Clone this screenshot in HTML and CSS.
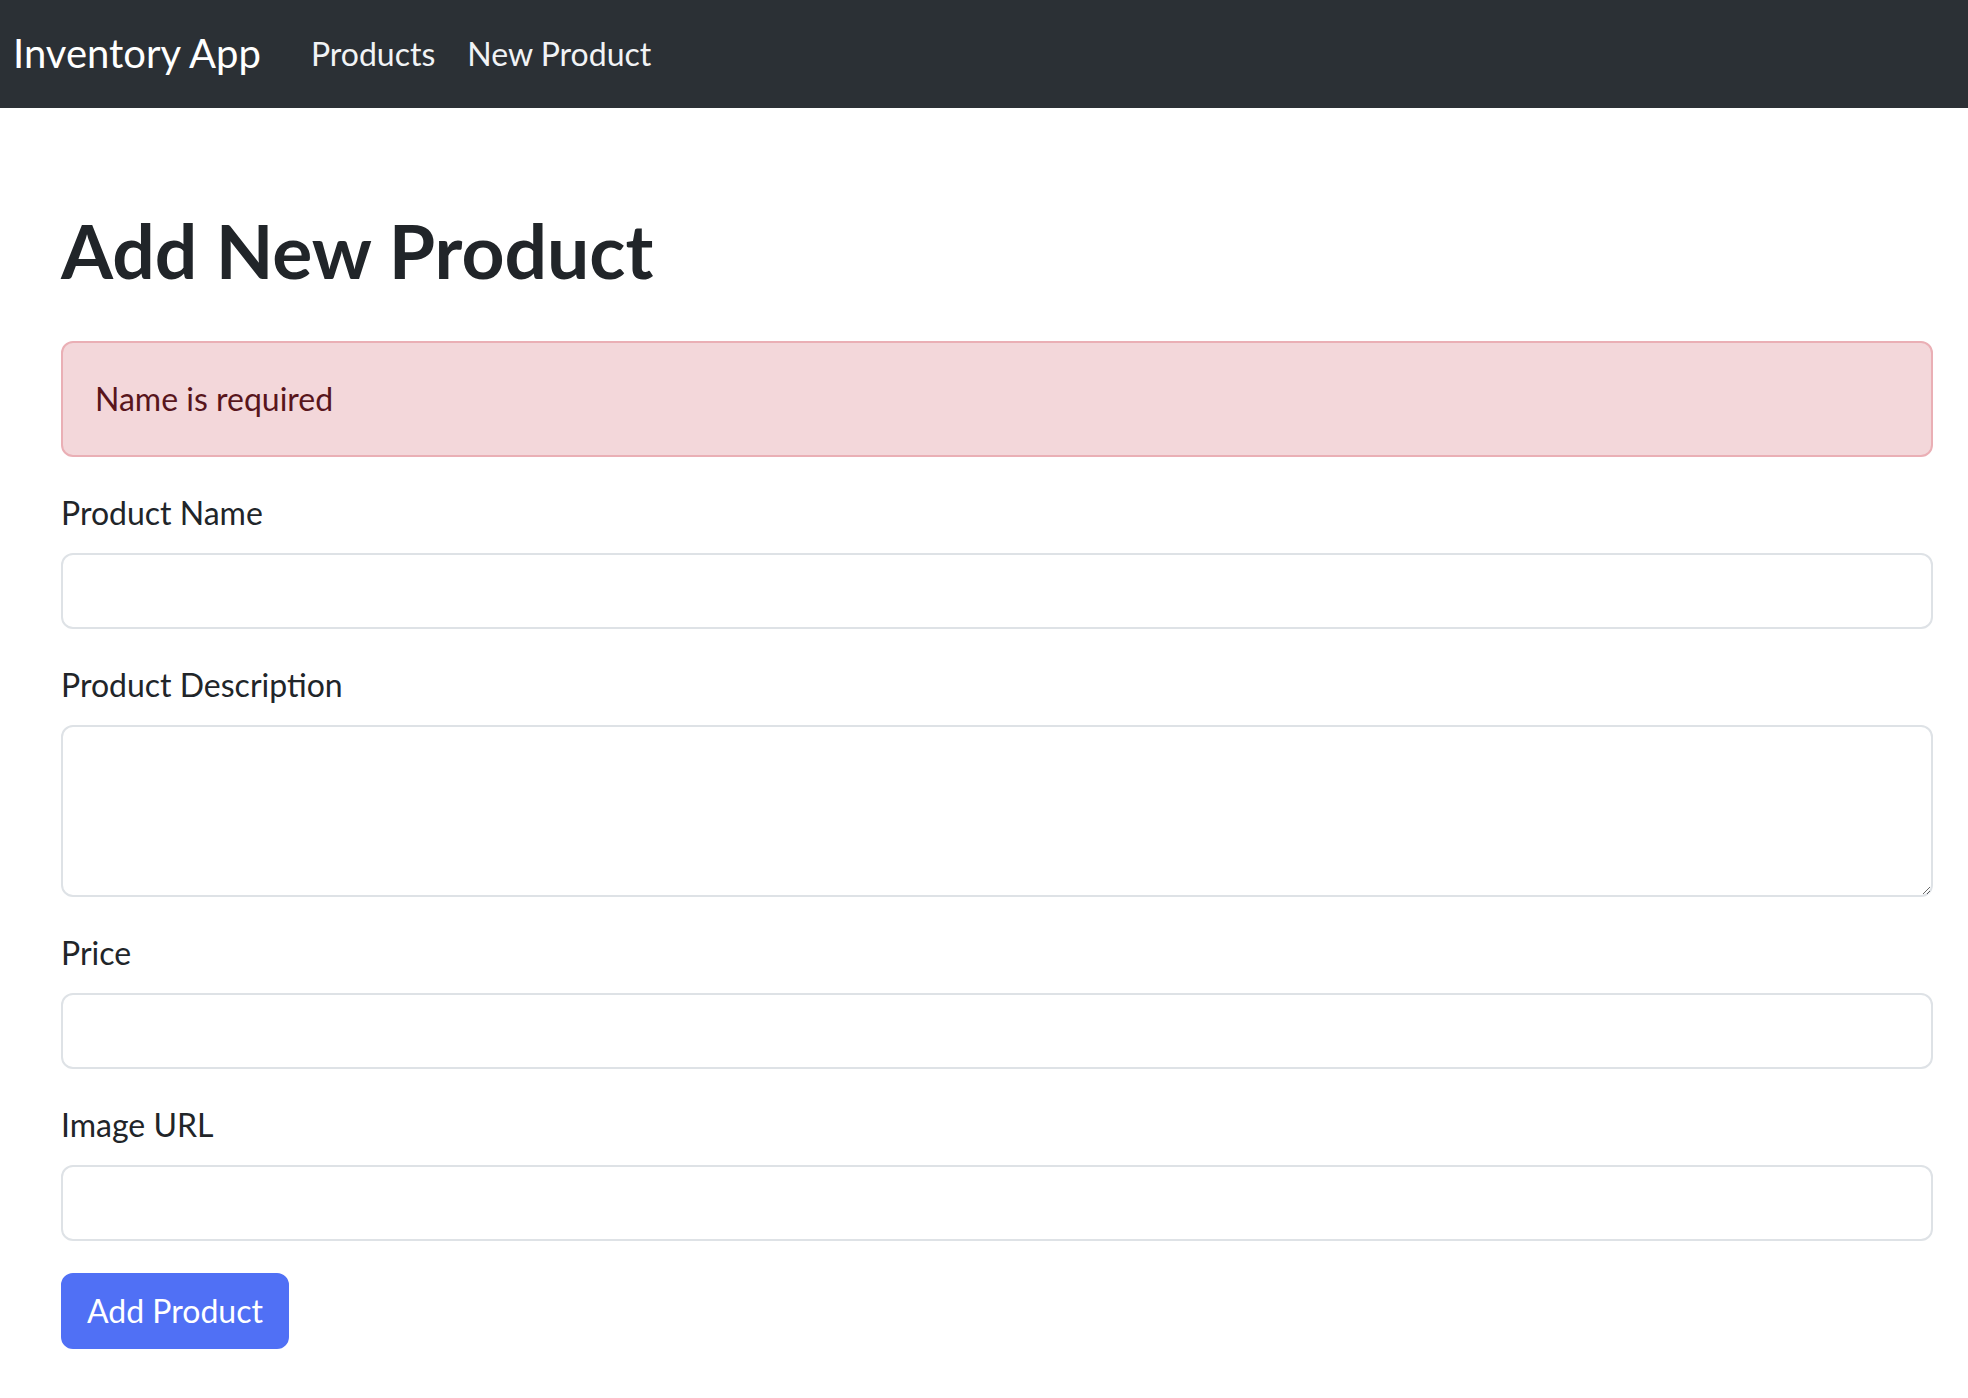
FILE: index.html
```html
<!DOCTYPE html>
<html lang="en">
<head>
<meta charset="utf-8">
<title>Inventory App</title>
<link rel="stylesheet" href="styles.css">
</head>
<body>
<header class="navbar">
  <a class="brand" href="#">Inventory App</a>
  <nav class="nav-links">
    <a class="nav-link" href="#">Products</a>
    <a class="nav-link" href="#">New Product</a>
  </nav>
</header>
<main class="container">
  <h1 class="page-title">Add New Product</h1>
  <div class="alert">Name is required</div>
  <form class="product-form">
    <div class="field">
      <label class="field-label" for="name">Product Name</label>
      <input class="field-control" id="name" type="text">
    </div>
    <div class="field">
      <label class="field-label" for="desc">Product Description</label>
      <textarea class="field-control field-textarea" id="desc" rows="3"></textarea>
    </div>
    <div class="field">
      <label class="field-label" for="price">Price</label>
      <input class="field-control" id="price" type="text">
    </div>
    <div class="field">
      <label class="field-label" for="img">Image URL</label>
      <input class="field-control" id="img" type="text">
    </div>
    <button class="btn-primary" type="button">Add Product</button>
  </form>
</main>
</body>
</html>
```
FILE: styles.css
```css
* { box-sizing: border-box; }

html, body {
  margin: 0;
  padding: 0;
  background: #ffffff;
}

body {
  font-family: "Lato", "Open Sans", sans-serif;
  font-size: 32px;
  line-height: 48px;
  color: #212529;
}

.navbar {
  height: 108px;
  background: #2b3035;
  display: flex;
  align-items: center;
  padding-left: 13px;
}

.brand {
  font-size: 40px;
  line-height: 60px;
  color: #ffffff;
  text-decoration: none;
  margin-right: 34px;
  margin-bottom: 3px;
}

.nav-links {
  display: flex;
  align-items: center;
}

.nav-link {
  font-size: 32px;
  line-height: 48px;
  padding: 0 16px;
  color: #f1f3f5;
  text-decoration: none;
  margin-bottom: 1px;
}

.container {
  padding: 0 35px 40px 61px;
}

.page-title {
  margin: 0;
  padding-top: 96px;
  font-size: 75px;
  line-height: 92px;
  font-weight: 700;
  margin-bottom: 45px;
  letter-spacing: 0;
}

.alert {
  background: #f3d7da;
  border: 2px solid #eaafb5;
  border-radius: 12px;
  color: #58151c;
  padding: 32px;
  margin-bottom: 32px;
}

.product-form {
  display: flex;
  flex-direction: column;
  align-items: flex-start;
}

.field {
  width: 100%;
  margin-bottom: 32px;
}

.field-label {
  display: block;
  margin-bottom: 16px;
}

.field-control {
  display: block;
  width: 100%;
  height: 76px;
  padding: 12px 24px;
  font-family: inherit;
  font-size: 32px;
  line-height: 48px;
  color: #212529;
  background: #ffffff;
  border: 2px solid #dee2e6;
  border-radius: 12px;
  outline: none;
}

.field-textarea {
  height: 172px;
  resize: vertical;
}

.btn-primary {
  font-family: inherit;
  font-size: 32px;
  line-height: 48px;
  padding: 12px 24px;
  color: #ffffff;
  background: #5070f5;
  border: 2px solid #5070f5;
  border-radius: 12px;
  cursor: pointer;
}
```
